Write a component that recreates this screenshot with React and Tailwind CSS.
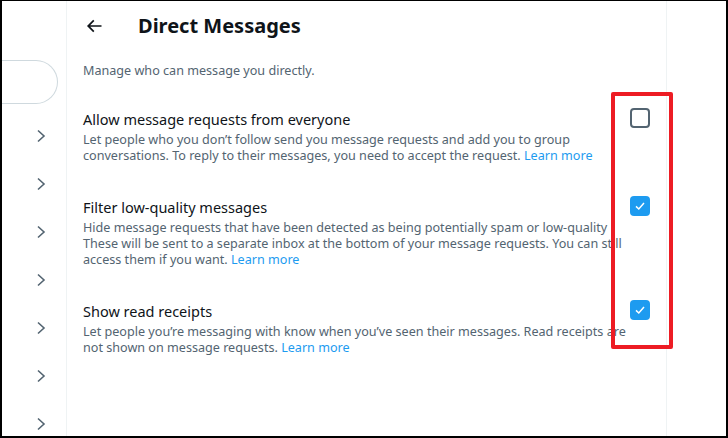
import React from "react";

const Chevron = () => (
  <svg width="10" height="14" viewBox="0 0 10 14" fill="none">
    <path d="M2 1.5 L8 7 L2 12.5" stroke="#536471" strokeWidth="1.6" />
  </svg>
);

const Checkbox = ({ checked }) =>
  checked ? (
    <div className="w-[20px] h-[20px] rounded-[4px] bg-[#1d9bf0] flex items-center justify-center">
      <svg width="12" height="12" viewBox="0 0 12 12" fill="none">
        <path d="M2 6.4 L4.8 9 L10 3" stroke="white" strokeWidth="1.5" />
      </svg>
    </div>
  ) : (
    <div className="w-[20px] h-[20px] rounded-[4px] border-2 border-[#536471]" />
  );

const LearnMore = () => <span className="text-[#1d9bf0]">Learn more</span>;

const Setting = ({ title, checked, children }) => (
  <div className="flex items-start justify-between px-4 pt-[18px] pb-[15px] relative">
    <div className="flex flex-col">
      <div className="text-[14.5px] leading-[20px] text-[#0f1419]">{title}</div>
      <div className="mt-[3px] text-[12.6px] leading-[16px] text-[#536471] whitespace-nowrap">
        {children}
      </div>
    </div>
    <div className="absolute right-4 top-[17px]">
      <Checkbox checked={checked} />
    </div>
  </div>
);

export default function App() {
  return (
    <div className="w-[728px] h-[438px] bg-white border-l-2 border-r-2 border-b-2 border-t border-black relative overflow-hidden flex font-['Noto_Sans',sans-serif]">
      {/* Sidebar */}
      <div className="w-[65px] shrink-0 border-r border-[#eff3f4] flex flex-col pt-[59px]">
        <div className="shrink-0 w-[56px] h-[44px] rounded-r-full border border-l-0 border-[#cfd9de]" />
        <div className="shrink-0 mt-[8px] flex flex-col">
          {[0, 1, 2, 3, 4, 5, 6].map((i) => (
            <div key={i} className="shrink-0 h-[48px] flex items-center justify-end pr-[20px]">
              <Chevron />
            </div>
          ))}
        </div>
      </div>

      {/* Main column */}
      <div className="w-[600px] shrink-0 border-r border-[#eff3f4] flex flex-col">
        <div className="h-[50px] shrink-0 flex items-center px-4">
          <div className="w-[55px] flex items-center">
            <svg width="20" height="20" viewBox="0 0 24 24" className="ml-[1px]">
              <path
                fill="#0f1419"
                d="M7.414 13l5.043 5.04-1.414 1.42L3.586 12l7.457-7.46 1.414 1.42L7.414 11H21v2H7.414z"
              />
            </svg>
          </div>
          <div className="text-[20px] font-bold text-[#0f1419] leading-[24px]">
            Direct Messages
          </div>
        </div>

        <div className="px-4 pt-[12px] text-[12.6px] leading-[16px] text-[#536471]">
          Manage who can message you directly.
        </div>

        <div className="pt-[12px]">
          <Setting title="Allow message requests from everyone" checked={false}>
            Let people who you don’t follow send you message requests and add you to group
            <br />
            conversations. To reply to their messages, you need to accept the request. <LearnMore />
          </Setting>
          <Setting title="Filter low-quality messages" checked>
            Hide message requests that have been detected as being potentially spam or low-quality
            <br />
            These will be sent to a separate inbox at the bottom of your message requests. You can still
            <br />
            access them if you want. <LearnMore />
          </Setting>
          <Setting title="Show read receipts" checked>
            Let people you’re messaging with know when you’ve seen their messages. Read receipts are
            <br />
            not shown on message requests. <LearnMore />
          </Setting>
        </div>
      </div>

      <div className="flex-1" />

      {/* Red annotation box */}
      <div className="absolute left-[609px] top-[91px] w-[62px] h-[257px] border-[4px] border-[#ed1c24] rounded-[2px]" />
    </div>
  );
}
